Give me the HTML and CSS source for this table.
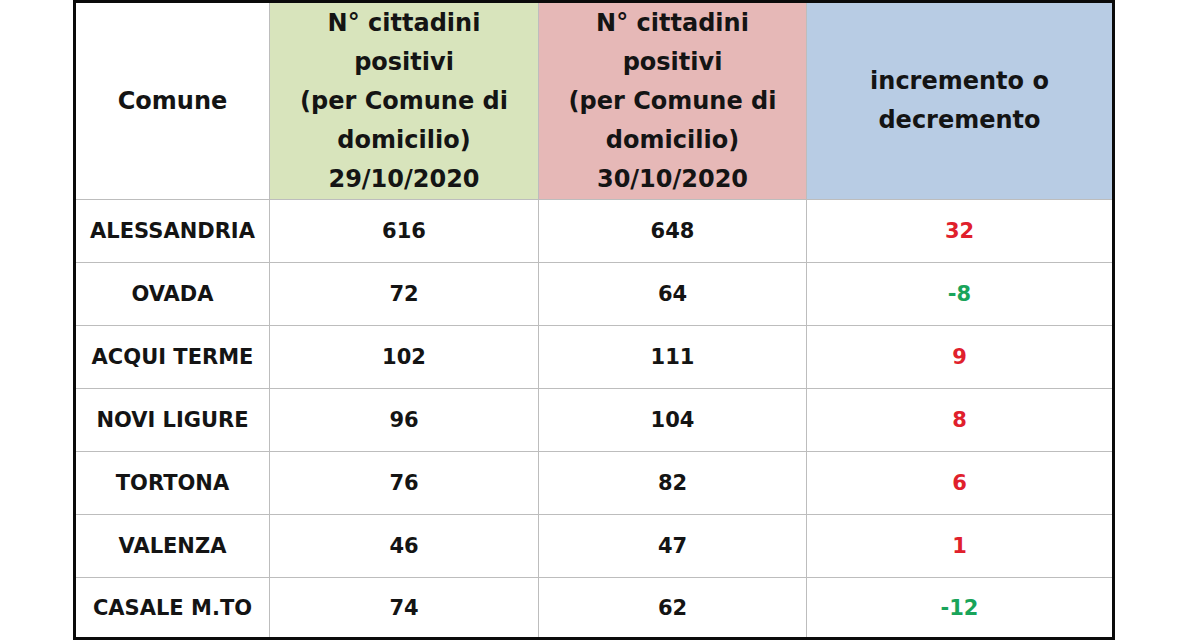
FILE: index.html
```html
<!DOCTYPE html>
<html lang="it">
<head>
<meta charset="utf-8">
<title>Cittadini positivi per Comune</title>
<link rel="stylesheet" href="styles.css">
</head>
<body>
<div class="sheet">
  <div class="cell head plain">Comune</div>
  <div class="cell head green">N° cittadini<br>positivi<br>(per Comune di<br>domicilio)<br>29/10/2020</div>
  <div class="cell head pink">N° cittadini<br>positivi<br>(per Comune di<br>domicilio)<br>30/10/2020</div>
  <div class="cell head blue">incremento o<br>decremento</div>

  <div class="cell name">ALESSANDRIA</div><div class="cell">616</div><div class="cell">648</div><div class="cell up">32</div>
  <div class="cell name">OVADA</div><div class="cell">72</div><div class="cell">64</div><div class="cell down">-8</div>
  <div class="cell name">ACQUI TERME</div><div class="cell">102</div><div class="cell">111</div><div class="cell up">9</div>
  <div class="cell name">NOVI LIGURE</div><div class="cell">96</div><div class="cell">104</div><div class="cell up">8</div>
  <div class="cell name">TORTONA</div><div class="cell">76</div><div class="cell">82</div><div class="cell up">6</div>
  <div class="cell name">VALENZA</div><div class="cell">46</div><div class="cell">47</div><div class="cell up">1</div>
  <div class="cell name">CASALE M.TO</div><div class="cell">74</div><div class="cell">62</div><div class="cell down">-12</div>
</div>
</body>
</html>
```
FILE: styles.css
```css
html, body {
  margin: 0;
  padding: 0;
  background: #ffffff;
}
body {
  width: 1200px;
  height: 640px;
  overflow: hidden;
  font-family: "DejaVu Sans", "Liberation Sans", sans-serif;
  font-weight: bold;
  color: #141414;
}
.sheet {
  margin-left: 73px;
  width: 1036px;
  border: 3px solid #0a0a0a;
  display: grid;
  grid-template-columns: 193px 268px 267px 305px;
  grid-template-rows: 196px repeat(6, 62px) 59px;
  gap: 1px;
  background: #bdbdbd;
}
.cell {
  background: #ffffff;
  display: flex;
  align-items: center;
  justify-content: center;
  text-align: center;
  font-size: 21px;
  line-height: 24px;
  white-space: nowrap;
}
.head {
  font-size: 24px;
  line-height: 39px;
}
.green { background: #d8e4bc; }
.pink { background: #e6b8b7; }
.blue { background: #b8cce4; }
.up { color: #e0202c; }
.down { color: #19a45a; }
```
